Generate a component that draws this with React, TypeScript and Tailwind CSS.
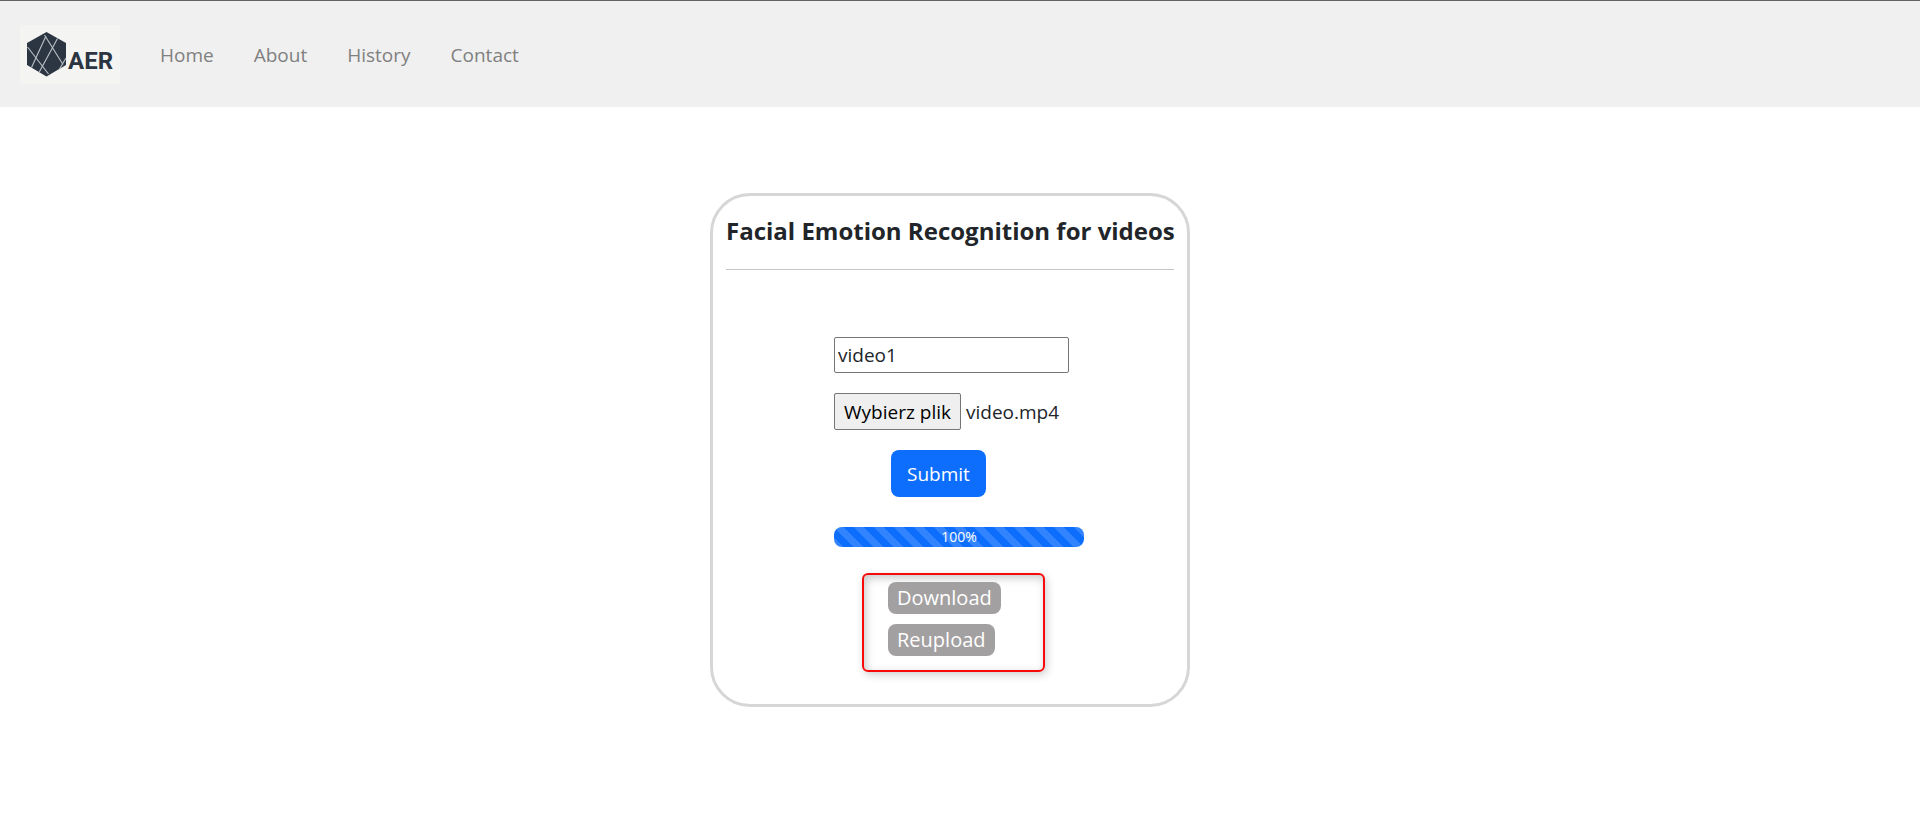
import { useRef, useState } from "react";

const links = ["Home", "About", "History", "Contact"];

function Logo() {
  return (
    <a href="#home" aria-label="AER" className="flex h-[59px] w-[100px] items-center bg-[#f4f4f3] pl-1.5">
      <svg viewBox="0 0 42 46" className="h-[46px] w-[42px] shrink-0" aria-hidden="true">
        <path d="M20.5 0 40 11v22L20.5 44.500 1 33V11Z" fill="#2b3642" />
        <path
          d="M18.500 3 37 32.500M1.500 15 22.500 42M20 4 5.500 35.500M31.500 6.500 13 40.500M40 26 33.500 37"
          fill="none"
          stroke="#b4bac0"
          strokeWidth="1.2"
        />
      </svg>
      <span className="self-end pb-[11px] font-[Roboto,sans-serif] text-2xl leading-6 font-bold text-[#2b3642]">AER</span>
    </a>
  );
}

export default function App() {
  const picker = useRef<HTMLInputElement>(null);
  const [name, setName] = useState("video1");
  const [file, setFile] = useState("video.mp4");

  return (
    <div className="min-h-screen bg-white font-['Open_Sans',sans-serif] text-[19px] leading-7 text-[#212529]">
      <header className="border-t border-[#666164] bg-[#f0f0f0]">
        <nav className="flex items-center gap-10 px-5 pt-6 pb-[23px]">
          <Logo />
          <ul className="flex gap-10 text-[#808080]">
            {links.map((link) => (
              <li key={link}>
                <a href={`#${link.toLowerCase()}`}>{link}</a>
              </li>
            ))}
          </ul>
        </nav>
      </header>

      <main className="flex justify-center pt-[86px] pr-5">
        <section className="w-[480px] rounded-[40px] border-3 border-[#d6d6d6] px-[13px] pb-8">
          <h1 className="border-b border-[#c5c6c7] pt-[19px] pb-[22px] text-center text-2xl leading-8 font-bold whitespace-nowrap">
            Facial Emotion Recognition for videos
          </h1>

          <form className="ml-[108px] flex w-[250px] flex-col items-start pt-[67px]" onSubmit={(e) => e.preventDefault()}>
            <input
              aria-label="Video name"
              value={name}
              onChange={(e) => setName(e.target.value)}
              className="h-9 w-[235px] rounded-xs border border-[#767676] px-[3px]"
            />
            <div className="mt-5 flex items-center gap-[5px]">
              <button
                type="button"
                onClick={() => picker.current?.click()}
                className="h-[37px] rounded-xs border border-[#767676] bg-[#efefef] px-[9px] whitespace-nowrap text-black"
              >
                Wybierz plik
              </button>
              <span>{file}</span>
              <input
                ref={picker}
                type="file"
                accept="video/*"
                aria-label="Video file"
                className="hidden"
                onChange={(e) => setFile(e.target.files?.[0]?.name ?? file)}
              />
            </div>
            <button type="submit" className="mt-5 ml-[57px] h-[47px] rounded-lg bg-[#0d6efd] px-4 text-white">
              Submit
            </button>
            <div
              role="progressbar"
              aria-label="Upload"
              aria-valuenow={100}
              className="mt-[30px] flex h-5 w-full items-center justify-center rounded-lg bg-[#0d6efd] bg-[linear-gradient(45deg,#ffffff26_25%,transparent_25%,transparent_50%,#ffffff26_50%,#ffffff26_75%,transparent_75%,transparent)] bg-size-[20px_20px] text-sm text-white"
            >
              100%
            </div>
          </form>

          <div className="mt-[26px] ml-[136px] flex w-[183px] flex-col items-start gap-2.5 rounded-md border-2 border-[#f90a0a] pt-[7px] pb-3.5 pl-6 text-xl shadow-[2px_3px_8px_#00000030,inset_2px_3px_8px_#00000038]">
            <button type="button" className="h-8 rounded-lg bg-[#a3a0a1] px-[9px] text-white">
              Download
            </button>
            <button type="button" className="h-8 rounded-lg bg-[#a3a0a1] px-[9px] text-white">
              Reupload
            </button>
          </div>
        </section>
      </main>
    </div>
  );
}
